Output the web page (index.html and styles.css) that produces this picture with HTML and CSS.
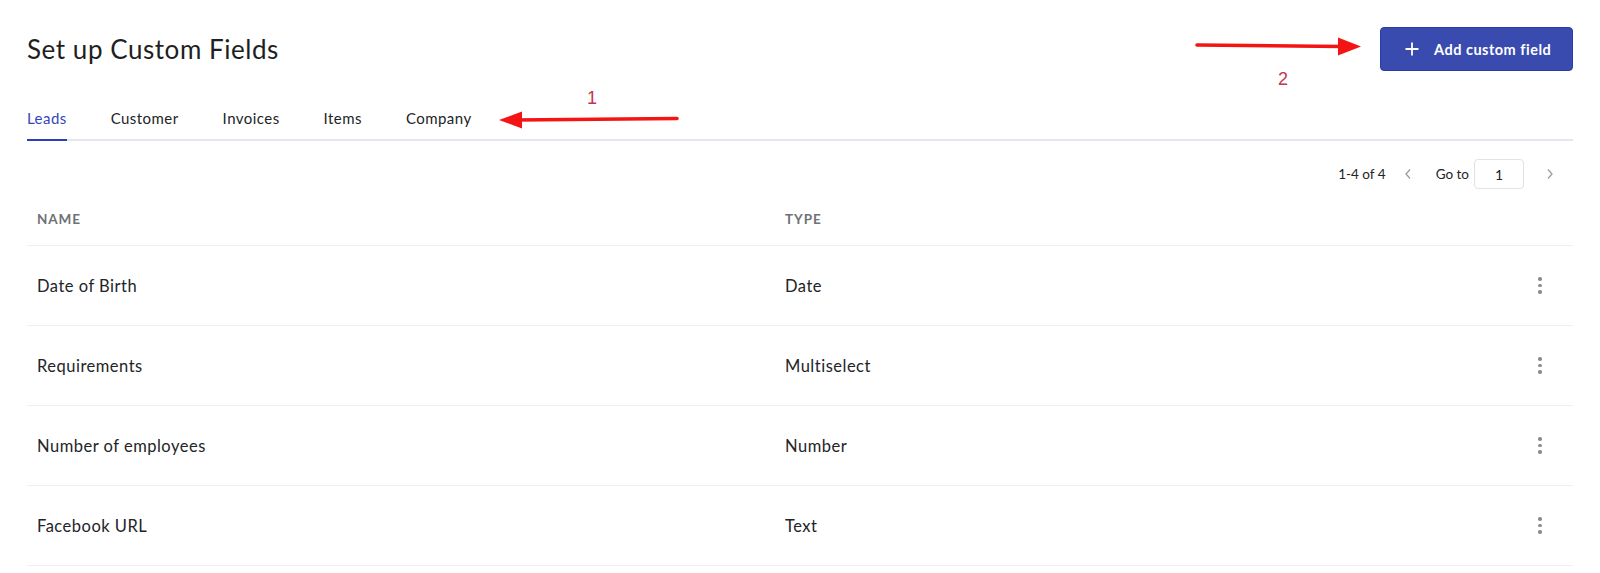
FILE: index.html
```html
<!DOCTYPE html>
<html lang="en">
<head>
<meta charset="utf-8">
<title>Set up Custom Fields</title>
<link rel="stylesheet" href="styles.css">
</head>
<body>
<div class="page">
  <header class="topbar">
    <h1 class="title">Set up Custom Fields</h1>
    <button class="btn-add" type="button">
      <svg class="plus" width="14" height="14" viewBox="0 0 14 14"><path d="M7 0.5V13.5M0.5 7H13.5" stroke="#fff" stroke-width="1.8" fill="none"/></svg>
      <span>Add custom field</span>
    </button>
  </header>

  <nav class="tabs">
    <a class="tab active">Leads</a>
    <a class="tab">Customer</a>
    <a class="tab">Invoices</a>
    <a class="tab">Items</a>
    <a class="tab">Company</a>
  </nav>

  <div class="pager">
    <span class="range">1-4 of 4</span>
    <button class="chev prev" type="button"><svg width="8" height="12" viewBox="0 0 8 12"><path d="M6 1.5L2 6L6 10.5" stroke="#9a9ca3" stroke-width="1.3" fill="none"/></svg></button>
    <span class="goto">Go to</span>
    <span class="page-input">1</span>
    <button class="chev next" type="button"><svg width="8" height="12" viewBox="0 0 8 12"><path d="M2 1.5L6 6L2 10.5" stroke="#9a9ca3" stroke-width="1.3" fill="none"/></svg></button>
  </div>

  <div class="table">
    <div class="row head">
      <div class="cell">NAME</div>
      <div class="cell">TYPE</div>
      <div class="cell"></div>
    </div>
    <div class="row">
      <div class="cell">Date of Birth</div>
      <div class="cell">Date</div>
      <div class="cell kebab"><i></i><i></i><i></i></div>
    </div>
    <div class="row">
      <div class="cell">Requirements</div>
      <div class="cell">Multiselect</div>
      <div class="cell kebab"><i></i><i></i><i></i></div>
    </div>
    <div class="row">
      <div class="cell">Number of employees</div>
      <div class="cell">Number</div>
      <div class="cell kebab"><i></i><i></i><i></i></div>
    </div>
    <div class="row">
      <div class="cell">Facebook URL</div>
      <div class="cell">Text</div>
      <div class="cell kebab"><i></i><i></i><i></i></div>
    </div>
  </div>

  <svg class="annot" width="1600" height="573" viewBox="0 0 1600 573">
    <path d="M677 118.5L516 120" stroke="#f41414" stroke-width="3.6" stroke-linecap="round" fill="none"/>
    <polygon points="499,120 522,111.5 522,128.5" fill="#f41414"/>
    <text x="592" y="104" class="annot-num" text-anchor="middle">1</text>
    <path d="M1197 45L1342 46.5" stroke="#f41414" stroke-width="3.6" stroke-linecap="round" fill="none"/>
    <polygon points="1361,46.5 1338,37.5 1338,55.5" fill="#f41414"/>
    <text x="1283" y="85" class="annot-num" text-anchor="middle">2</text>
  </svg>
</div>
</body>
</html>
```

FILE: styles.css
```css
* { box-sizing: border-box; }

html, body {
  margin: 0;
  padding: 0;
  background: #ffffff;
}

body {
  font-family: "Lato", "Noto Sans", "Liberation Sans", sans-serif;
  color: #222326;
}

.page {
  position: relative;
  width: 1600px;
  height: 573px;
  padding: 27px 27px 0 27px;
  overflow: hidden;
}

.topbar {
  display: flex;
  justify-content: space-between;
  align-items: center;
  height: 44px;
}

.title {
  margin: 0;
  font-size: 26px;
  font-weight: 400;
  color: #1e1f22;
  letter-spacing: 0.55px;
  line-height: 32px;
}

.btn-add {
  display: flex;
  align-items: center;
  gap: 15px;
  height: 44px;
  width: 193px;
  padding: 0 0 0 24px;
  border: 1px solid #2b3ca6;
  border-radius: 4px;
  background: #3a4bb0;
  color: #ffffff;
  font-family: inherit;
  font-size: 14.5px;
  font-weight: 700;
  letter-spacing: 0.5px;
  cursor: pointer;
}

.plus { display: block; }

.tabs {
  display: flex;
  gap: 44px;
  margin-top: 37px;
  border-bottom: 2px solid #e5e7ef;
}

.tab {
  display: block;
  font-size: 15px;
  line-height: 20px;
  letter-spacing: 0.45px;
  padding-bottom: 11px;
  margin-bottom: -2px;
  border-bottom: 2px solid transparent;
  color: #232427;
}

.tab.active {
  color: #3446b8;
  border-bottom-color: #2c3fb4;
}

.pager {
  display: flex;
  justify-content: flex-end;
  align-items: center;
  height: 30px;
  margin-top: 18px;
  padding-right: 11px;
  font-size: 13.5px;
  color: #232427;
}

.range { margin-right: 10px; }

.chev {
  display: flex;
  align-items: center;
  justify-content: center;
  width: 24px;
  height: 30px;
  padding: 0;
  border: 0;
  background: transparent;
}

.goto { margin-left: 16px; margin-right: 5px; }

.page-input {
  display: flex;
  align-items: center;
  justify-content: center;
  width: 50px;
  height: 30px;
  border: 1px solid #dfe2e8;
  border-radius: 4px;
  font-size: 14px;
  margin-right: 14px;
}

.table {
  display: flex;
  flex-direction: column;
}

.row {
  display: grid;
  grid-template-columns: 748px 1fr 66px;
  align-items: center;
  height: 80px;
  border-bottom: 1px solid #eceef4;
}

.row.head {
  height: 57px;
  padding-top: 3px;
}

.cell {
  padding-left: 10px;
  font-size: 16.5px;
  letter-spacing: 0.5px;
  color: #232427;
}

.row.head .cell {
  font-size: 13.5px;
  font-weight: 700;
  color: #6f7176;
  letter-spacing: 0.9px;
}

.kebab {
  padding-left: 0;
  display: flex;
  flex-direction: column;
  align-items: center;
  gap: 3px;
}

.kebab i {
  display: block;
  width: 3.4px;
  height: 3.4px;
  border-radius: 50%;
  background: #8a8c91;
}

.annot {
  position: absolute;
  top: 0;
  left: 0;
  pointer-events: none;
}

.annot-num {
  font-family: "Liberation Sans", sans-serif;
  font-size: 18px;
  fill: #c4344f;
}
```
